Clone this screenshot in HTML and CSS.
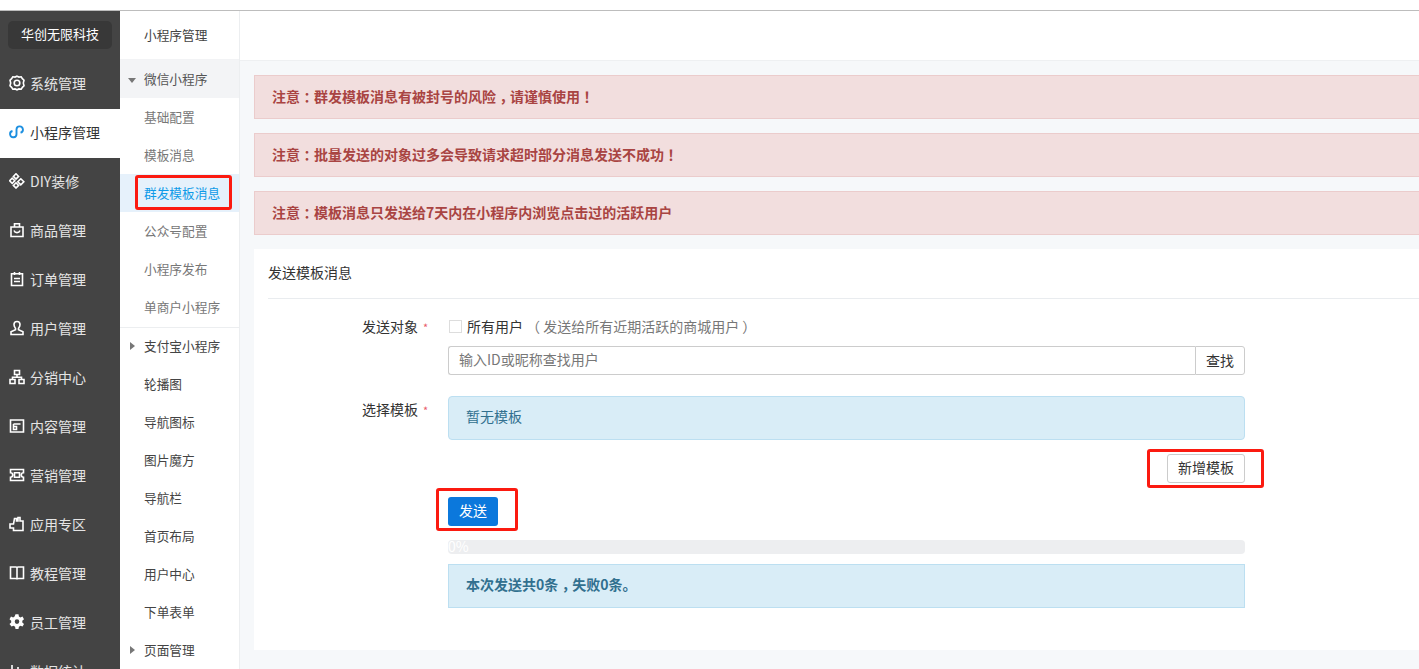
FILE: index.html
```html
<!DOCTYPE html>
<html lang="zh">
<head>
<meta charset="utf-8">
<title>群发模板消息</title>
<link rel="stylesheet" href="styles.css">
</head>
<body>
<div class="topline"></div>
<div class="app">
  <nav class="side">
    <div class="brand-row"><div class="brand">华创无限科技</div></div>
    <a class="side-item"><svg class="ic" viewBox="0 0 16 16"><path d="M8 1.200l2 .9 2.200-.3 1.200 1.900 1.600 1.500-.7 2.800.7 2.800-1.600 1.500-1.200 1.900-2.200-.3-2 .9-2-.9-2.200.3-1.200-1.900L1 10.800l.7-2.800L1 5.200l1.600-1.500 1.200-1.900 2.200.3z"/><circle cx="8" cy="8" r="2.800"/></svg>系统管理</a>
    <a class="side-item active"><svg class="ic link" viewBox="0 0 16 16"><path d="M3.500 7A3.200 3.200 0 1 0 7.500 10V5.500A3.200 3.200 0 1 1 11.500 8.700"/></svg>小程序管理</a>
    <a class="side-item"><svg class="ic" viewBox="0 0 16 16"><path d="M7 .8l2.600 2.600L7 6 4.400 3.400zM3.200 5.200l2.600 2.600-2.600 2.600L.6 7.800zM11.800 5.800l3 3-3 3-3-3zM7 9.800l2.600 2.600L7 15l-2.600-2.600z"/></svg>DIY装修</a>
    <a class="side-item"><svg class="ic" viewBox="0 0 16 16"><path d="M2 5h12v9.500H2zM5.500 5V1.800h5V5M5 8.500c1 2.800 5 2.800 6 0"/></svg>商品管理</a>
    <a class="side-item"><svg class="ic" viewBox="0 0 16 16"><path d="M2.500 2.800h11v11.700h-11zM5.500 1v3M10.500 1v3M5 7.500h6M5 10.500h6"/></svg>订单管理</a>
    <a class="side-item"><svg class="ic" viewBox="0 0 16 16"><path d="M5 4.500a3 3 0 1 1 6 0c0 2-1 3-1.500 3.800v1.500l4.500 2v2.700H2v-2.700l4.500-2V8.300C6 7.500 5 6.500 5 4.500z"/></svg>用户管理</a>
    <a class="side-item"><svg class="ic" viewBox="0 0 16 16"><path d="M5.500 1.500h5v4h-5zM1 10.500h5v4H1zM10 10.500h5v4h-5zM8 5.500v2.700M3.500 10.500V8.200h9v2.300"/></svg>分销中心</a>
    <a class="side-item"><svg class="ic" viewBox="0 0 16 16"><path d="M1.500 2h13v12h-13zM4.500 6h7M4.500 6v5.500h3V8.500h-3"/></svg>内容管理</a>
    <a class="side-item"><svg class="ic" viewBox="0 0 16 16"><path d="M1.500 2.500h13v3.300a2.200 2.200 0 0 0 0 4.400v3.300h-13v-3.300a2.200 2.200 0 0 0 0-4.400zM5.500 5.800h5v4.400h-5z"/></svg>营销管理</a>
    <a class="side-item"><svg class="ic" viewBox="0 0 16 16"><path d="M5.500 2.500h2V5h1.500V1.500h2V5h3v9.500H4.500V12H1V8h3.500z"/></svg>应用专区</a>
    <a class="side-item"><svg class="ic" viewBox="0 0 16 16"><path d="M1.500 2h5.500c.7 0 1 .5 1 1 0-.5.300-1 1-1h5.500v11.500H9.500c-.8 0-1.500.3-1.500 1 0-.7-.7-1-1.500-1h-5zM8 3v11.500"/></svg>教程管理</a>
    <a class="side-item"><svg class="ic solid" viewBox="0 0 16 16"><path fill-rule="evenodd" d="M6.500.3h3l.4 2.200 1.500.9 2.100-.8 1.500 2.600-1.700 1.500v1.800l1.700 1.500-1.500 2.600-2.100-.8-1.500.9-.4 2.200h-3l-.4-2.200-1.500-.9-2.100.8L.5 10l1.700-1.500V6.700L.5 5.200 2 2.600l2.100.8 1.500-.9zM8 5.300a2.300 2.300 0 1 0 0 4.600 2.300 2.300 0 0 0 0-4.600z"/></svg>员工管理</a>
    <a class="side-item"><svg class="ic" viewBox="0 0 16 16"><path d="M3 2v12h11M6 11V7M9 11V4M12 11V8"/></svg>数据统计</a>
  </nav>
  <aside class="sub">
    <div class="sub-title">小程序管理</div>
    <div class="sub-row group open"><span class="caret down"></span>微信小程序</div>
    <div class="sub-row muted">基础配置</div>
    <div class="sub-row muted">模板消息</div>
    <div class="sub-row current">群发模板消息</div>
    <div class="sub-row muted">公众号配置</div>
    <div class="sub-row muted">小程序发布</div>
    <div class="sub-row muted last">单商户小程序</div>
    <div class="sub-row group"><span class="caret right"></span>支付宝小程序</div>
    <div class="sub-row">轮播图</div>
    <div class="sub-row">导航图标</div>
    <div class="sub-row">图片魔方</div>
    <div class="sub-row">导航栏</div>
    <div class="sub-row">首页布局</div>
    <div class="sub-row">用户中心</div>
    <div class="sub-row">下单表单</div>
    <div class="sub-row group"><span class="caret right"></span>页面管理</div>
  </aside>
  <main class="main">
    <div class="main-top"></div>
    <div class="content">
      <div class="warn">注意<span class="p">：</span>群发模板消息有被封号的风险<span class="p">，</span>请谨慎使用<span class="p">！</span></div>
      <div class="warn">注意<span class="p">：</span>批量发送的对象过多会导致请求超时部分消息发送不成功<span class="p">！</span></div>
      <div class="warn">注意<span class="p">：</span>模板消息只发送给7天内在小程序内浏览点击过的活跃用户</div>
      <section class="card">
        <header class="card-head">发送模板消息</header>
        <div class="form">
          <div class="row row-target">
            <label class="lbl">发送对象<i>*</i></label>
            <div class="ctl">
              <div class="check-line"><span class="check"></span><span class="check-text">所有用户</span><span class="hint">（ 发送给所有近期活跃的商城用户 ）</span></div>
              <div class="search"><div class="search-input">输入ID或昵称查找用户</div><div class="search-btn">查找</div></div>
            </div>
          </div>
          <div class="row row-tpl">
            <label class="lbl">选择模板<i>*</i></label>
            <div class="ctl">
              <div class="info rounded">暂无模板</div>
              <div class="add-line"><div class="btn-add">新增模板</div></div>
              <div class="btn-send">发送</div>
              <div class="progress">0%</div>
              <div class="info strong">本次发送共0条<span class="p">，</span>失败0条。</div>
            </div>
          </div>
        </div>
      </section>
    </div>
  </main>
</div>
<div class="mark mark-sub"></div>
<div class="mark mark-add"></div>
<div class="mark mark-send"></div>
</body>
</html>
```
FILE: styles.css
```css
* { box-sizing: border-box; }
html, body { margin: 0; height: 669px; overflow: hidden; }
body {
  position: relative;
  background: #fff;
  font-family: "Noto Sans CJK SC", "Liberation Sans", sans-serif;
  font-size: 14px;
  color: #333;
}
.p { font-feature-settings: "halt"; padding: 0 3.5px; }
.topline { height: 11px; border-bottom: 1px solid #bdbdbd; }
.app { display: flex; height: 658px; overflow: hidden; }

.side { width: 120px; flex: none; background: #444; color: #e4e4e4; }
.brand-row { height: 49px; padding: 10px 8px 11px; }
.brand {
  height: 28px; line-height: 25px; text-align: center;
  background: #383838; border-radius: 5px; color: #fff; font-size: 13px;
}
.side-item { display: flex; align-items: center; height: 49px; padding: 0 0 4px 9px; gap: 5px; white-space: nowrap; }
.side-item.active { background: #fff; color: #333; }
.ic { width: 16px; height: 16px; flex: none; fill: none; stroke: #fff; stroke-width: 1.6; }
.ic.solid { fill: #fff; stroke: none; }
.active .ic { stroke: #1c8fe0; }
.ic.link { stroke-width: 1.9; }

.sub { width: 120px; flex: none; background: #fff; border-right: 1px solid #eceef0; font-size: 12.7px; color: #444; }
.sub-title { height: 49px; line-height: 48px; padding-left: 24px; border-bottom: 1px solid #f2f3f5; }
.sub-row { position: relative; height: 38px; line-height: 37px; padding-left: 24px; white-space: nowrap; }
.sub-row.open { background: #f3f4f6; color: #555; }
.sub-row.muted { color: #777; }
.sub-row.last { height: 39px; box-shadow: 0 1px 0 #eceef0; }
.sub-row.current { background: #e6f1fb; color: #0f9be8; }
.caret { position: absolute; width: 0; height: 0; }
.caret.down { left: 8px; top: 18px; border: 4px solid transparent; border-top: 5px solid #777; border-bottom: 0; }
.caret.right { left: 10px; top: 15px; border: 4px solid transparent; border-left: 5px solid #777; border-right: 0; }

.main { flex: 1; min-width: 0; background: #f6f8fa; overflow: hidden; }
.main-top { height: 50px; background: #fff; border-bottom: 1px solid #eef0f2; }
.content { padding: 14px 0 0 14px; }
.warn {
  height: 44px; line-height: 40px; padding-left: 17px; margin: 0 -10px 14px 0;
  background: #f2dede; border: 1px solid #ebcccc; color: #a94442; font-weight: 700;
}
.card { height: 401px; background: #fff; padding-left: 14px; }
.card-head { height: 50px; line-height: 47px; border-bottom: 1px solid #e9ecef; }
.form { width: 977px; }
.row { display: grid; grid-template-columns: 166px 797px; gap: 14px; }
.row-target { padding-top: 15px; }
.row-tpl { padding-top: 21px; }
.lbl { display: block; padding: 1px 0 0 94px; line-height: 22px; white-space: nowrap; }
.lbl i { margin-left: 5px; color: #e85a6a; font-style: normal; font-size: 11px; }
.row-tpl .lbl { margin-top: 2px; padding-top: 0; }
.check-line { display: flex; align-items: center; height: 22px; margin-top: 1px; }
.check { width: 13px; height: 13px; margin: 0 5px 0 1px; border: 1px solid #ddd; background: #fff; }
.check-text { margin-right: 3px; }
.hint { color: #777; }
.search { display: flex; height: 29px; margin-top: 9px; }
.search-input {
  flex: 1; line-height: 24px; padding-left: 10px; color: #777;
  border: 1px solid #ccc; border-right: 0; border-radius: 3px 0 0 3px;
}
.search-btn {
  width: 50px; line-height: 26px; text-align: center; color: #333;
  border: 1px solid #ccc; border-radius: 0 3px 3px 0;
}
.info {
  height: 44px; line-height: 39px; padding-left: 17px;
  background: #d9edf7; border: 1px solid #bce8f1; color: #31708f;
}
.info.rounded { border-radius: 4px; border-color: #bcdff1; }
.info.strong { font-weight: 700; margin-top: 10px; border-color: #bcdff1; }
.add-line { display: flex; justify-content: flex-end; margin-top: 14px; }
.btn-add {
  width: 78px; height: 29px; line-height: 25px; text-align: center; color: #333;
  border: 1px solid #ccc; border-radius: 3px; background: #fff;
}
.btn-send {
  width: 50px; height: 29px; line-height: 26px; margin-top: 14px; text-align: center;
  background: #0b78dc; color: #fff; border-radius: 3px;
}
.progress {
  height: 14px; margin-top: 14px; line-height: 13px; font-size: 14px;
  background: #edeef0; color: #fff; border-radius: 4px;
}
.mark { position: absolute; border: 3px solid #fb1a10; border-radius: 3px; }
.mark-sub { left: 135px; top: 175px; width: 97px; height: 35px; }
.mark-add { left: 1147px; top: 449px; width: 117px; height: 39px; }
.mark-send { left: 436px; top: 488px; width: 82px; height: 43px; }
```
